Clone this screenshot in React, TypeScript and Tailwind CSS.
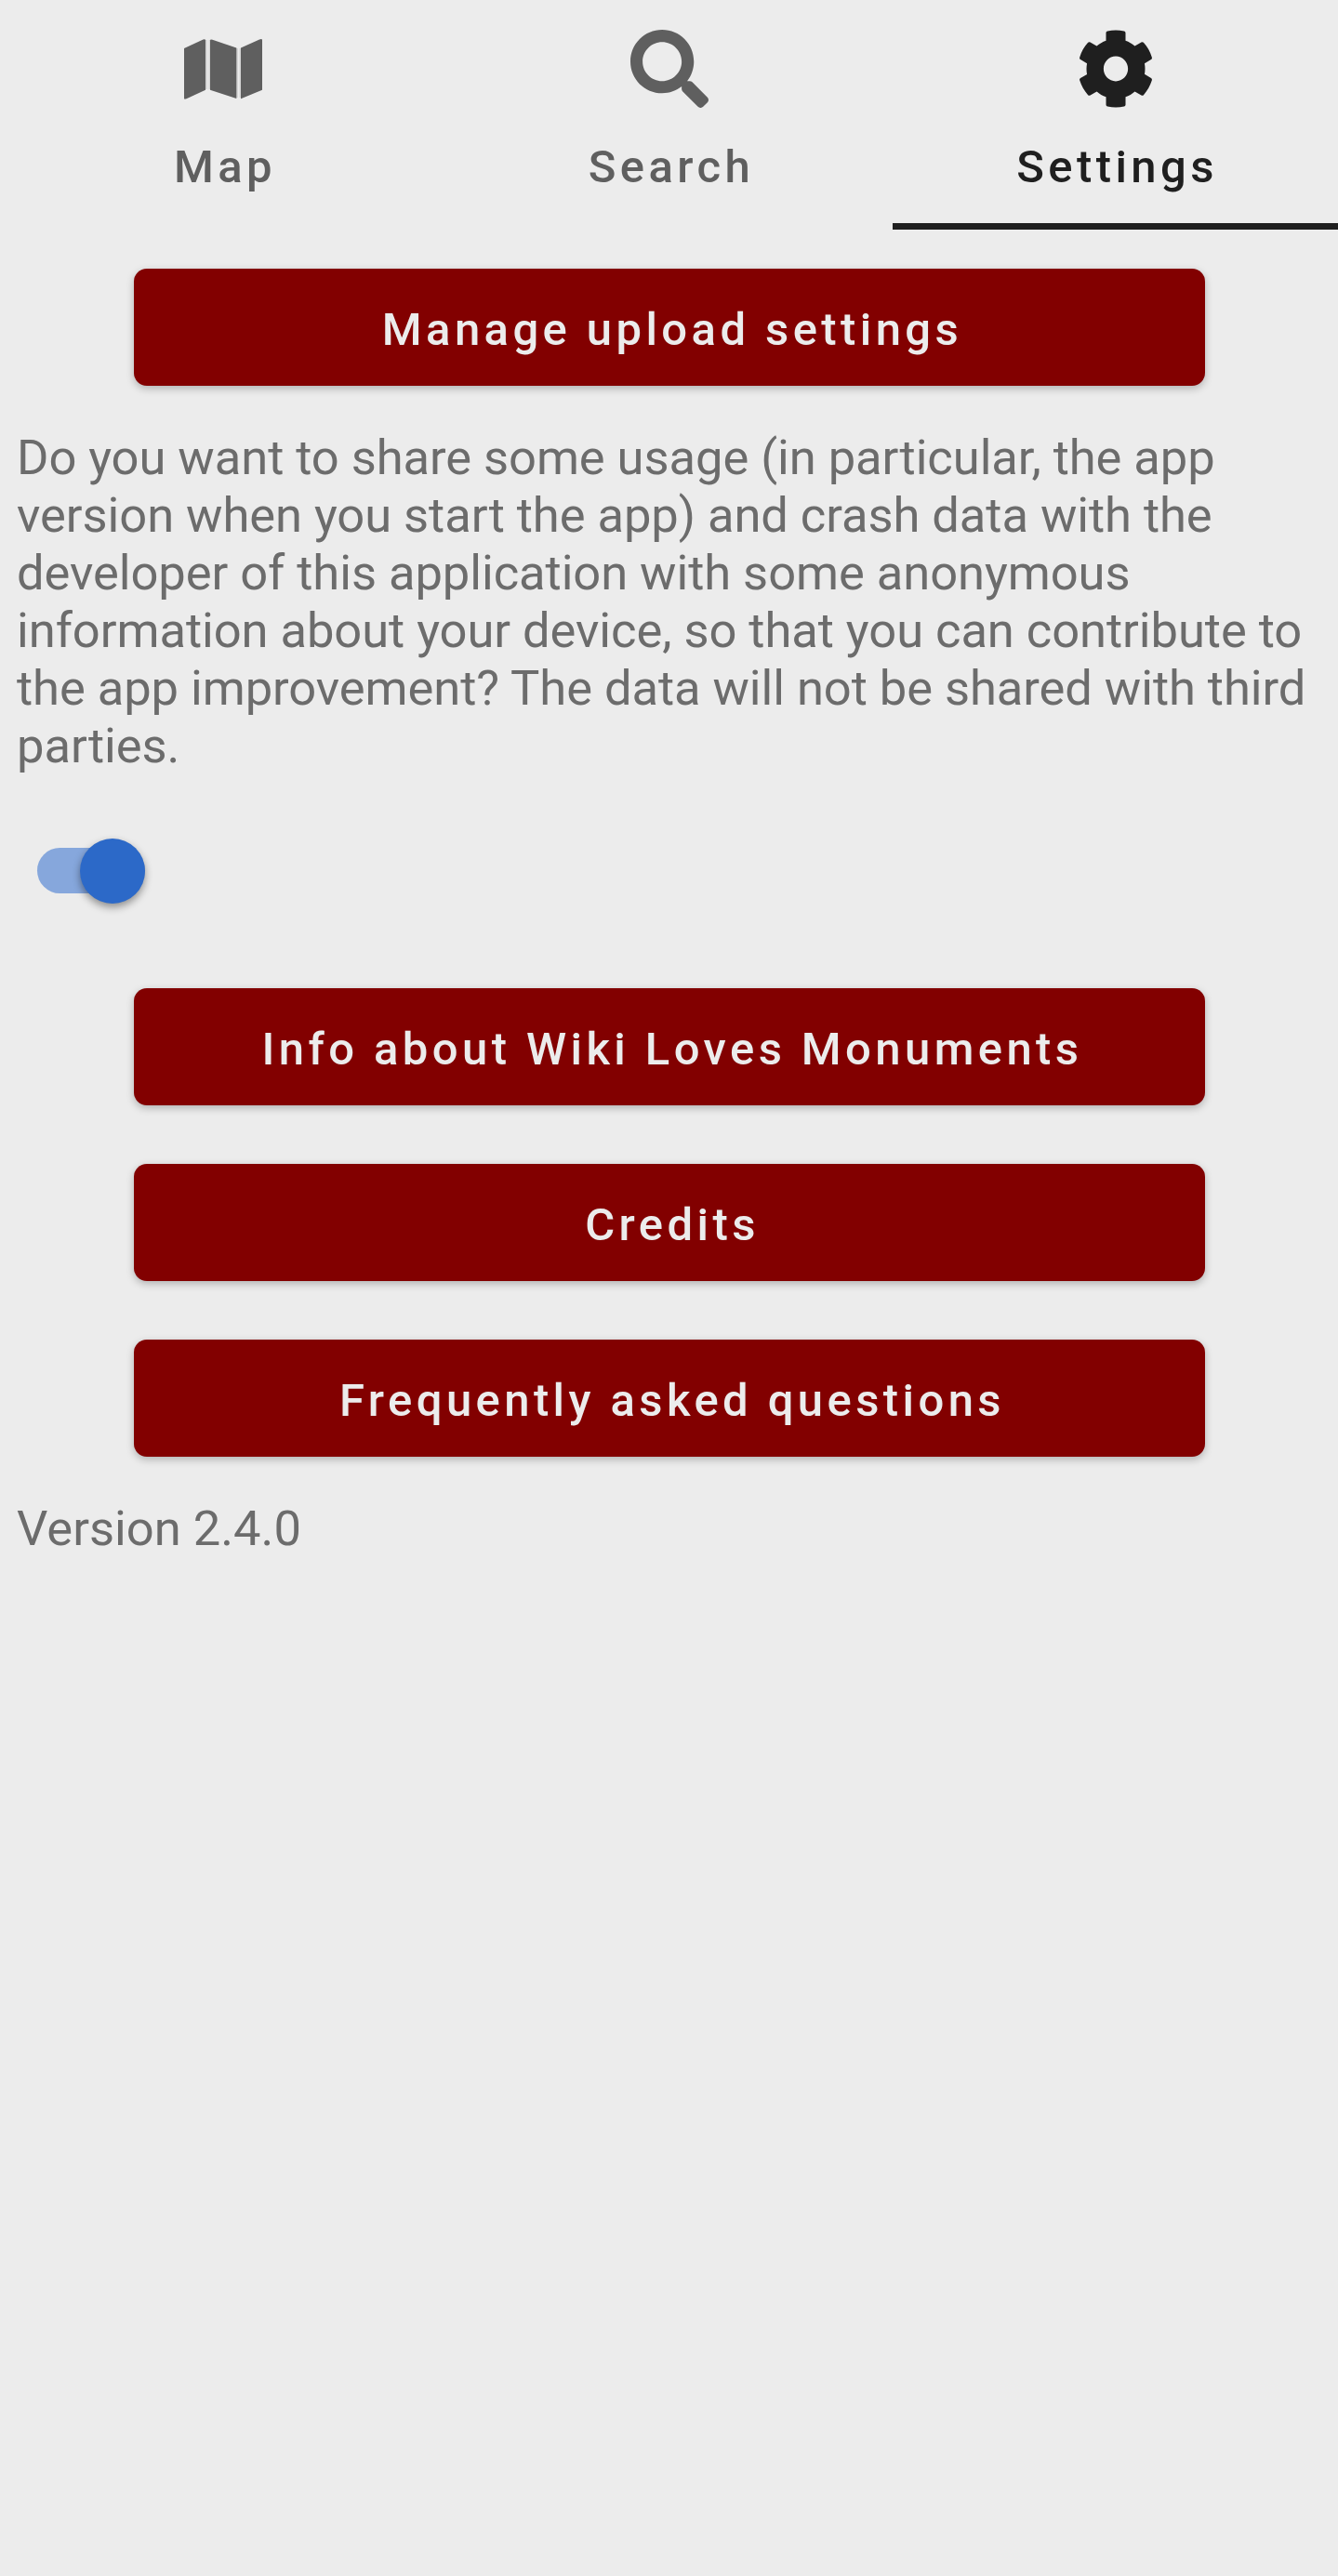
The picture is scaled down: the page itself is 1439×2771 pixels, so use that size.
import React from "react";
import { FaSearch, FaCog } from "react-icons/fa";

function MapIcon() {
  return (
    <svg width="84" height="84" viewBox="0 0 84 84" fill="currentColor">
      <path d="M22.500 11H25V64H22.500ZM26.500 11H28.500V64H26.500ZM56 20H58V73H56ZM59.500 20H61.500V73H59.500Z" opacity="0.16" />
      <path d="M0 20L20.500 10.500Q23 9.600 23 11.500V64.800L3 74Q0 75.200 0 74Z" />
      <path d="M28 11.500Q28 10 30.500 10.800L56.300 19.600V74L28 64.700Z" />
      <path d="M61 19.600L81 10.400Q84 9.400 84 11V64.800L61 74.200Z" />
    </svg>
  );
}

function Tab({ icon, label, active }: { icon: React.ReactNode; label: string; active?: boolean }) {
  return (
    <div className={`flex flex-col items-center h-[247px] pt-8 border-b-[7px] ${active ? "text-[#1f1f1f] border-[#1f1f1f]" : "text-[#5f5f5f] border-transparent"}`}>
      <div className="h-[84px] w-[84px] flex items-center justify-center">{icon}</div>
      <div className="mt-[36px] text-[49px] leading-[56px] font-medium tracking-[4.41px] pl-[4px]">{label}</div>
    </div>
  );
}

function Button({ children }: { children: React.ReactNode }) {
  return (
    <button className="mx-auto flex h-[126px] w-[1152px] items-center justify-center rounded-[14px] bg-[#820000] pt-[6px] pl-[7px] text-[49px] font-medium tracking-[4.41px] text-[#ececec] shadow-[0_3px_8px_rgba(0,0,0,0.25)]">
      {children}
    </button>
  );
}

const paragraph = [
  "Do you want to share some usage (in particular, the app",
  "version when you start the app) and crash data with the",
  "developer of this application with some anonymous",
  "information about your device, so that you can contribute to",
  "the app improvement? The data will not be shared with third",
  "parties.",
];

export default function App() {
  return (
    <div className="h-[2771px] w-[1439px] overflow-hidden bg-[#ececec] font-['Roboto',sans-serif]">
      <div className="grid grid-cols-[480px_480px_479px]">
        <Tab icon={<MapIcon />} label="Map" />
        <Tab icon={<FaSearch size={84} />} label="Search" />
        <Tab icon={<FaCog size={84} className="scale-y-[1.02]" />} label="Settings" active />
      </div>
      <div className="mt-[42px]"><Button>Manage upload settings</Button></div>
      <p className="mt-[46px] pl-[18px] text-[52.5px] leading-[62px] tracking-[-0.065px] whitespace-nowrap text-[#6c6c6c]">
        {paragraph.map((line) => <span key={line} className="block">{line}</span>)}
      </p>
      <div className="mt-[68px] ml-[40px] flex h-[70px] w-[116px] items-center">
        <div className="flex h-[49px] w-full items-center justify-end rounded-full bg-[#86a7dc]">
          <div className="mt-[2px] h-[70px] w-[70px] shrink-0 rounded-full bg-[#2c69c8] shadow-[0_4px_8px_rgba(0,0,0,0.4)]" />
        </div>
      </div>
      <div className="mt-[92px] flex flex-col gap-[63px]">
        <Button>Info about Wiki Loves Monuments</Button>
        <Button>Credits</Button>
        <Button>Frequently asked questions</Button>
      </div>
      <p className="mt-[46px] pl-[18px] text-[52.5px] leading-[62px] text-[#6c6c6c]">Version 2.4.0</p>
    </div>
  );
}
